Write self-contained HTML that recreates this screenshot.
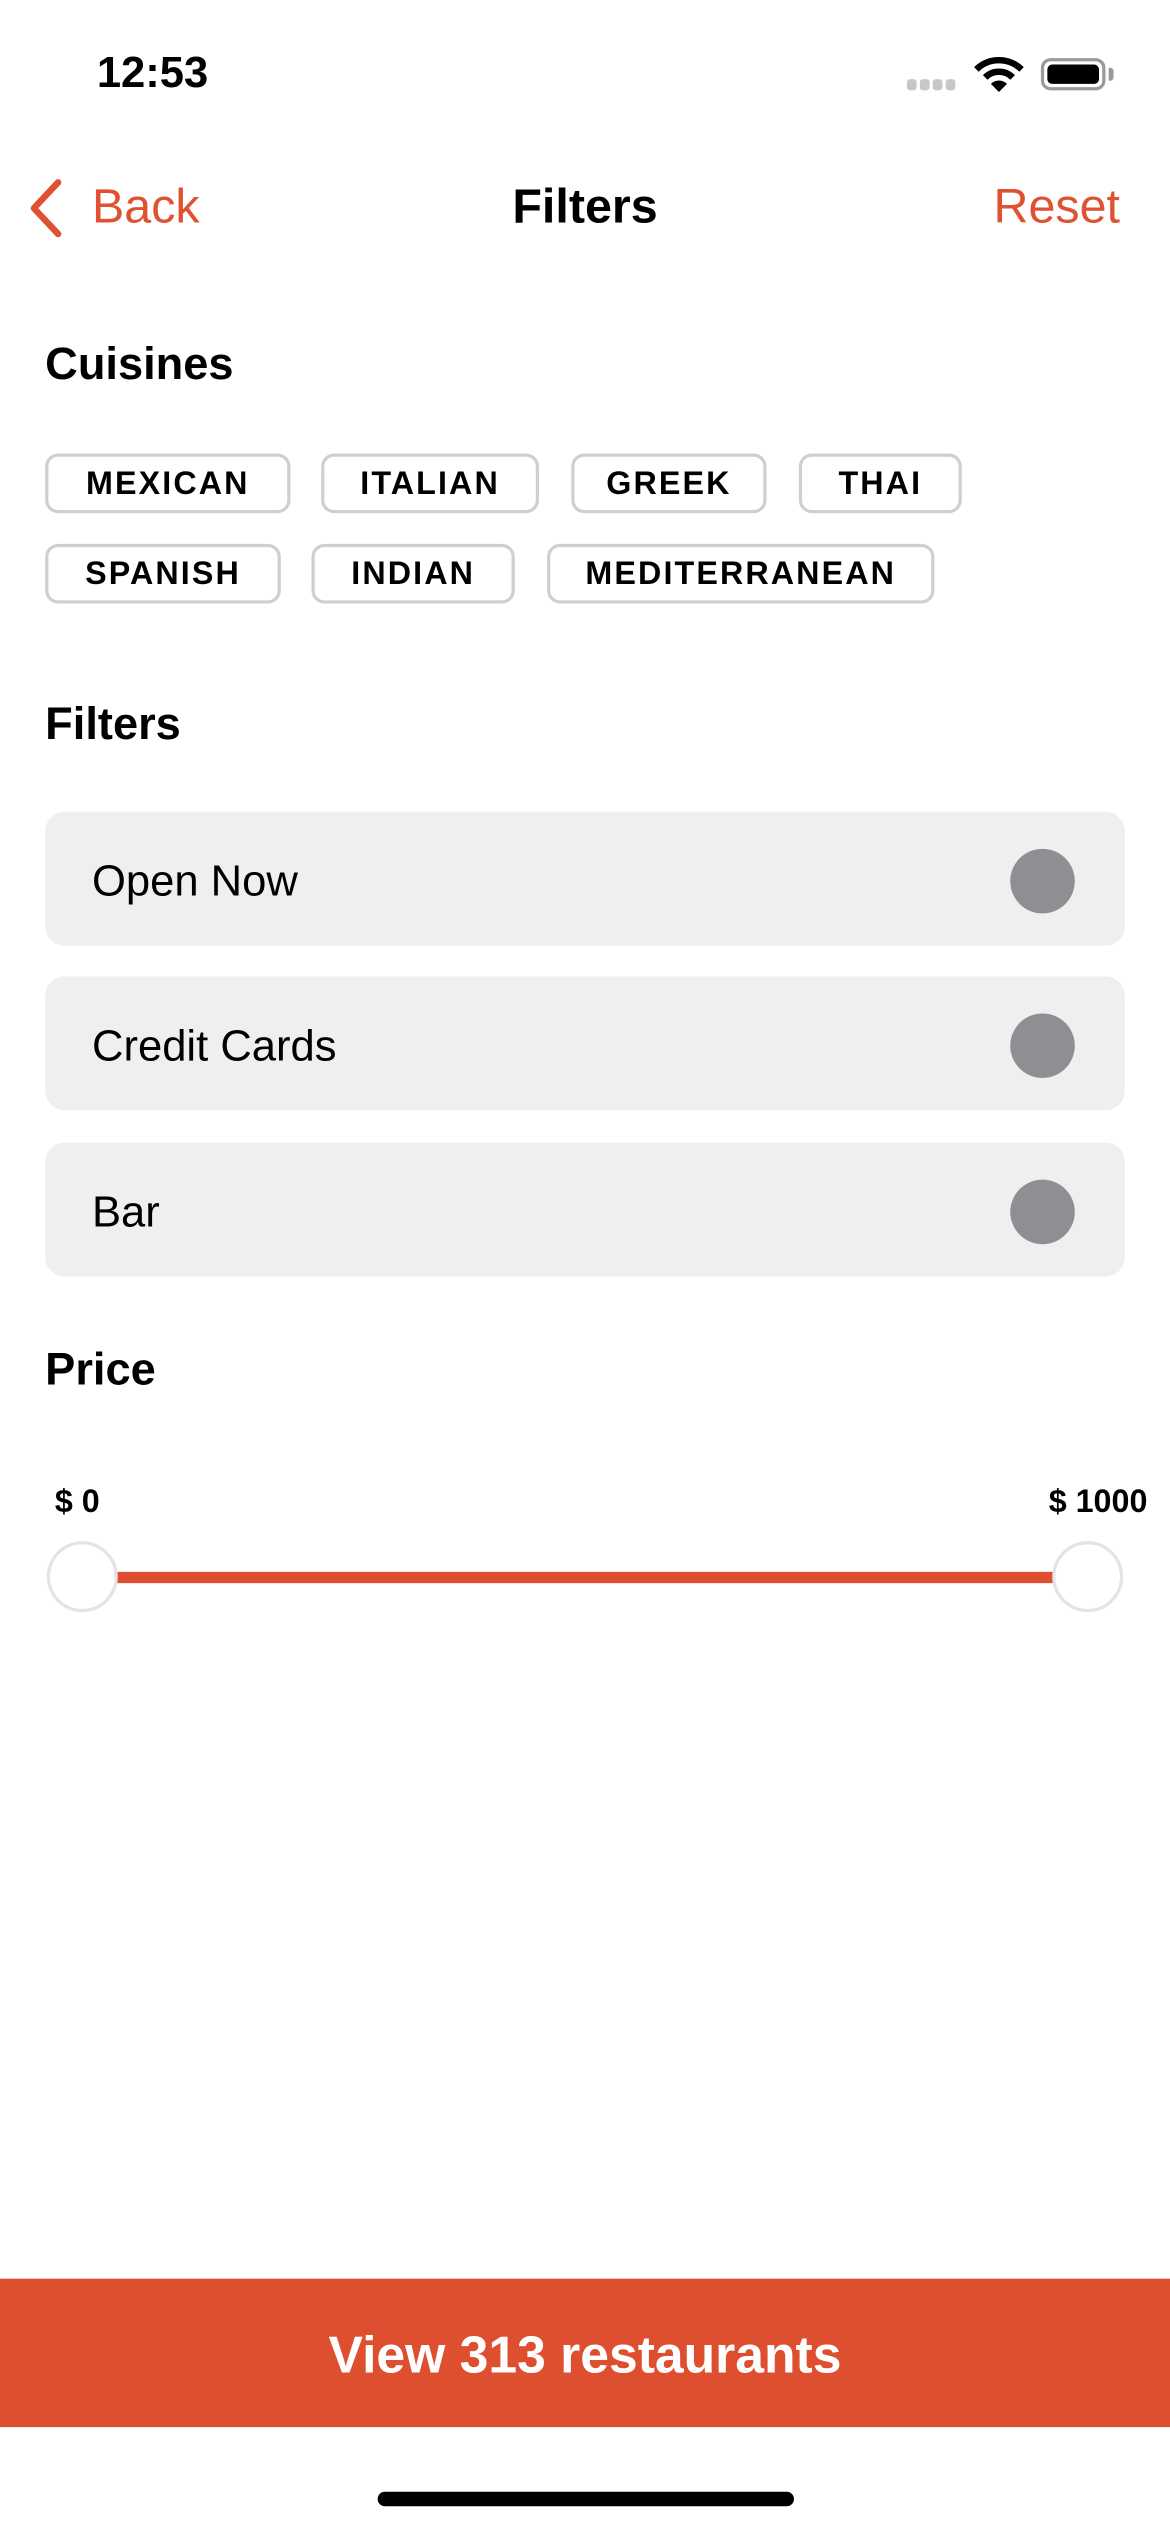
<!DOCTYPE html>
<html><head><meta charset="utf-8"><style>
html,body{margin:0;padding:0;background:#fff;}
body{width:1170px;height:2532px;overflow:hidden;position:relative;}
#w{position:absolute;left:0;top:0;width:725px;height:1569px;transform:scale(1.613793);transform-origin:0 0;font-family:"Liberation Sans",sans-serif;color:#000;}
.a{position:absolute;}
.chip{position:absolute;border:2px solid #cfcfcf;border-radius:8px;box-sizing:border-box;height:37px;font-weight:bold;font-size:20px;letter-spacing:1.3px;display:flex;align-items:center;justify-content:center;padding-top:2px;}
.row{position:absolute;left:28px;width:669px;height:83px;background:#efefef;border-radius:12px;}
.row span{position:absolute;left:29px;top:2px;line-height:83px;font-size:27px;}
.row i{position:absolute;left:598px;top:23px;width:40px;height:40px;border-radius:50%;background:#8e8e93;}
.h{position:absolute;left:28px;font-size:28px;font-weight:bold;}
.thumb{position:absolute;width:44px;height:44px;border-radius:50%;border:2px solid #e3e3e8;background:#fff;box-sizing:border-box;}
</style></head><body><div id="w">
<div class="a" style="left:60px;top:30px;font-size:27px;font-weight:bold;">12:53</div>
<div class="a" style="left:562px;top:49px;line-height:0">
<span style="display:inline-block;width:6px;height:7px;background:#c7c7c7;border-radius:2px;margin-right:2px"></span><span style="display:inline-block;width:6px;height:7px;background:#c7c7c7;border-radius:2px;margin-right:2px"></span><span style="display:inline-block;width:6px;height:7px;background:#c7c7c7;border-radius:2px;margin-right:2px"></span><span style="display:inline-block;width:6px;height:7px;background:#c7c7c7;border-radius:2px;"></span></div>
<svg class="a" style="left:603px;top:34px" width="32" height="24" viewBox="0 0 32 24"><path d="M2 9 A20 20 0 0 1 30 9" stroke="#000" stroke-width="4" fill="none"/><path d="M7.5 14 A12 12 0 0 1 24.5 14" stroke="#000" stroke-width="4" fill="none"/><path d="M11 18 L16 23 L21 18 A7 7 0 0 0 11 18Z" fill="#000"/></svg>
<div class="a" style="left:645px;top:36px;width:40px;height:20px;border:2px solid #999;border-radius:6px;box-sizing:border-box;padding:2px;"><div style="width:100%;height:100%;background:#000;border-radius:3px"></div></div>
<div class="a" style="left:687px;top:42px;width:3px;height:8px;background:#999;border-radius:0 2px 2px 0"></div>
<svg class="a" style="left:14px;top:110px" width="28" height="38" viewBox="0 0 28 38"><path d="M22 3 L7 19 L22 35" stroke="#df5131" stroke-width="4" fill="none" stroke-linecap="round" stroke-linejoin="round"/></svg>
<div class="a" style="left:57px;top:112px;font-size:30px;color:#df5131;">Back</div>
<div class="a" style="left:0;width:725px;text-align:center;top:112px;font-size:30px;font-weight:bold;">Filters</div>
<div class="a" style="right:31px;top:112px;font-size:30px;color:#df5131;">Reset</div>
<div class="h" style="top:210px;">Cuisines</div>
<div class="chip" style="left:28px;top:281px;width:152px">MEXICAN</div>
<div class="chip" style="left:199px;top:281px;width:135px">ITALIAN</div>
<div class="chip" style="left:354px;top:281px;width:121px">GREEK</div>
<div class="chip" style="left:495px;top:281px;width:101px">THAI</div>
<div class="chip" style="left:28px;top:337px;width:146px">SPANISH</div>
<div class="chip" style="left:193px;top:337px;width:126px">INDIAN</div>
<div class="chip" style="left:339px;top:337px;width:240px">MEDITERRANEAN</div>
<div class="h" style="top:433px;">Filters</div>
<div class="row" style="top:503px"><span>Open Now</span><i></i></div>
<div class="row" style="top:605px"><span>Credit Cards</span><i></i></div>
<div class="row" style="top:708px"><span>Bar</span><i></i></div>
<div class="h" style="top:833px;">Price</div>
<div class="a" style="left:34px;top:920px;font-size:20px;font-weight:bold;">$ 0</div>
<div class="a" style="right:14px;top:920px;font-size:20px;font-weight:bold;">$ 1000</div>
<div class="a" style="left:72px;top:974px;width:582px;height:7px;background:#dd4f2f"></div>
<div class="thumb" style="left:29px;top:955px"></div>
<div class="thumb" style="left:652px;top:955px"></div>
<div class="a" style="left:0;top:1412px;width:725px;height:92px;background:#dd4f2f;color:#fff;font-size:32px;font-weight:bold;text-align:center;line-height:94px;">View 313 restaurants</div>
<div class="a" style="left:234px;top:1544px;width:258px;height:9px;border-radius:5px;background:#000"></div>
</div></body></html>
